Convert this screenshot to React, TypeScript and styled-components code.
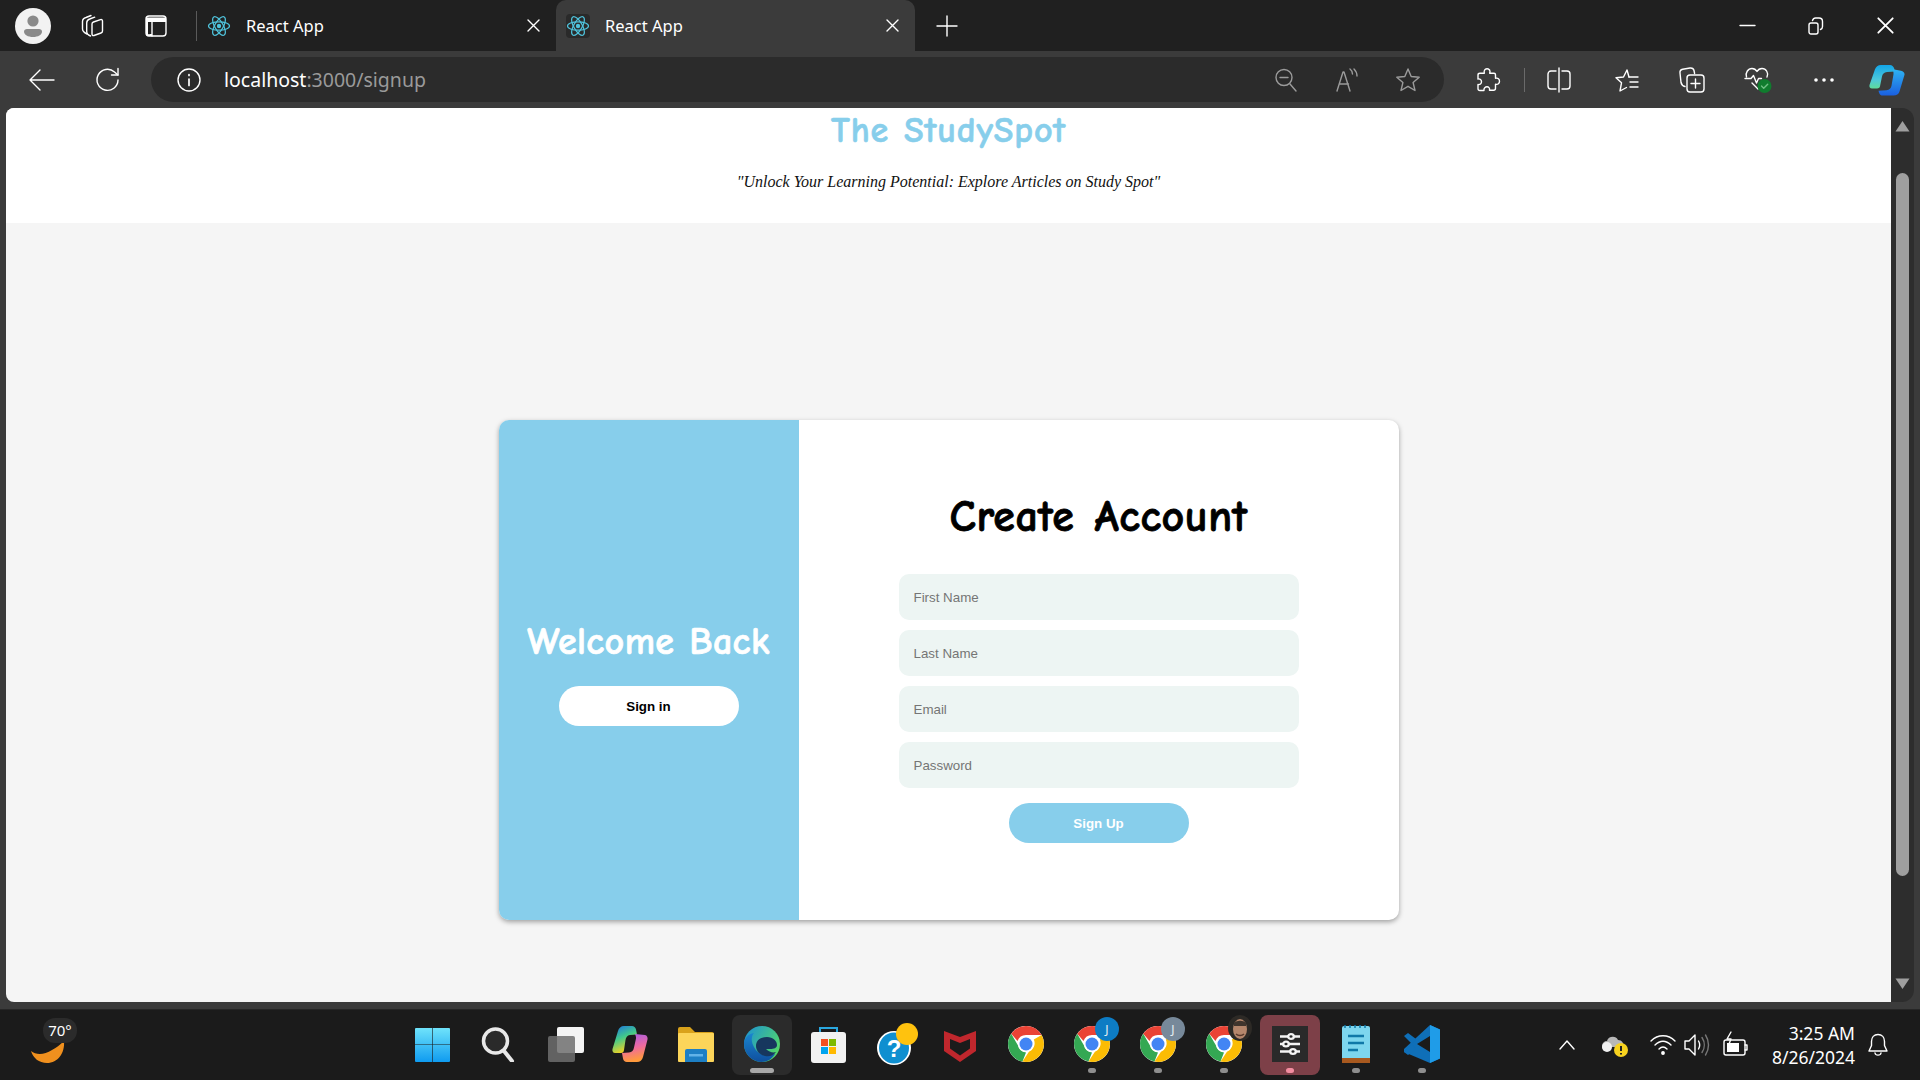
import React from 'react';
import styled, { createGlobalStyle } from 'styled-components';

const GlobalStyle = createGlobalStyle`
  html, body {
    margin: 0;
    padding: 0;
    height: 100%;
    overflow: hidden;
    background: #3b3b3b;
  }
  * { box-sizing: border-box; }
`;

const UI_FONT = `"Noto Sans", "Open Sans", sans-serif`;
const COMIC_FONT = `"Comic Sans MS", "Comic Neue", cursive`;
const SKY = '#87ceeb';

const Screen = styled.div`
  width: 1920px;
  height: 1080px;
  display: flex;
  flex-direction: column;
  background: #3b3b3b;
  overflow: hidden;
  font-family: ${UI_FONT};
`;

const TabStrip = styled.div`
  height: 51px;
  flex: none;
  display: flex;
  align-items: center;
  background: #202020;
`;

const IconSlot = styled.div<{ $w: number; $ml?: number }>`
  width: ${p => p.$w}px;
  margin-left: ${p => p.$ml ?? 0}px;
  flex: none;
  display: flex;
  align-items: center;
  justify-content: center;
`;

const StripDivider = styled.div`
  width: 1px;
  height: 30px;
  margin-left: 29px;
  background: #5a5a5a;
  flex: none;
`;

const Tab = styled.div<{ $active?: boolean }>`
  width: 359px;
  height: 51px;
  flex: none;
  display: flex;
  align-items: center;
  padding: 0 12px 0 10px;
  color: #fff;
  font-size: 16.5px;
  border-radius: 10px 10px 0 0;
  background: ${p => (p.$active ? '#3b3b3b' : 'transparent')};
`;

const TabTitle = styled.span`
  flex: 1;
  margin-left: 15px;
`;

const Spacer = styled.div`
  flex: 1;
`;

const Toolbar = styled.div`
  height: 57px;
  flex: none;
  display: flex;
  align-items: flex-start;
  padding-top: 6px;
  background: #3b3b3b;
`;

const ToolSlot = styled.div<{ $w: number }>`
  width: ${p => p.$w}px;
  height: 45px;
  flex: none;
  display: flex;
  align-items: center;
  justify-content: center;
`;

const AddressBar = styled.div`
  width: 1293px;
  height: 45px;
  flex: none;
  display: flex;
  align-items: center;
  padding: 0 4px 0 16px;
  background: #2b2b2b;
  border-radius: 23px;
`;

const UrlText = styled.div`
  flex: 1;
  margin-left: 13px;
  font-size: 19.5px;
  color: #9a9a9a;
`;

const UrlHost = styled.span`
  color: #fff;
`;

const ToolDivider = styled.div`
  width: 1px;
  height: 24px;
  margin-top: 11px;
  background: #6a6a6a;
  flex: none;
`;

const ContentRow = styled.div`
  height: 894px;
  flex: none;
  display: flex;
  padding: 0 6px;
`;

const Page = styled.div`
  flex: 1;
  min-width: 0;
  display: flex;
  flex-direction: column;
  background: #f5f5f5;
  border-radius: 8px 0 0 8px;
  overflow: hidden;
`;

const Header = styled.header`
  height: 115px;
  flex: none;
  background: #fff;
  text-align: center;
`;

const SiteTitle = styled.h1`
  margin: 0;
  padding-top: 3px;
  font: bold 36px/40px ${COMIC_FONT};
  letter-spacing: 0.9px;
  word-spacing: 1px;
  color: ${SKY};
  -webkit-text-stroke: 0.6px ${SKY};
`;

const Tagline = styled.p`
  margin: 21px 0 0;
  font: italic 16px/20px "Liberation Serif", serif;
  color: #111;
`;

const Main = styled.main`
  flex: 1;
  display: flex;
  justify-content: center;
  padding-top: 197px;
`;

const Card = styled.section`
  width: 900px;
  height: 500px;
  display: flex;
  background: #fff;
  border-radius: 10px;
  overflow: hidden;
  box-shadow: 0 2px 5px rgba(0, 0, 0, 0.35);
`;

const WelcomePanel = styled.div`
  width: 300px;
  flex: none;
  display: flex;
  flex-direction: column;
  align-items: center;
  padding-top: 197px;
  background: ${SKY};
`;

const WelcomeTitle = styled.h2`
  margin: 0 0 19px;
  font: bold 38px/50px ${COMIC_FONT};
  letter-spacing: 0.4px;
  word-spacing: 1px;
  color: #fff;
  -webkit-text-stroke: 0.7px #fff;
`;

const PillButton = styled.button<{ $primary?: boolean }>`
  width: 180px;
  height: 40px;
  border: 0;
  border-radius: 20px;
  font: bold 13.33px "Liberation Sans", Arial, sans-serif;
  background: ${p => (p.$primary ? SKY : '#fff')};
  color: ${p => (p.$primary ? '#fff' : '#000')};
`;

const FormPanel = styled.form`
  flex: 1;
  display: flex;
  flex-direction: column;
  align-items: center;
  padding-top: 69px;
`;

const FormTitle = styled.h2`
  margin: 0 0 29px;
  font: bold 44px/56px ${COMIC_FONT};
  letter-spacing: 0.5px;
  word-spacing: 4px;
  color: #000;
  -webkit-text-stroke: 0.8px #000;
`;

const Field = styled.input`
  width: 400px;
  height: 46px;
  flex: none;
  margin-bottom: 10px;
  padding: 0 15px;
  border: 0;
  border-radius: 10px;
  background: #edf5f3;
  font: 13.33px "Liberation Sans", Arial, sans-serif;
  &::placeholder { color: #757575; }
`;

const SubmitRow = styled.div`
  margin-top: 5px;
`;

const ScrollTrack = styled.div`
  width: 23px;
  flex: none;
  position: relative;
  background: #2d2d2d;
  border-radius: 0 12px 12px 0;
`;

const ScrollThumb = styled.div`
  position: absolute;
  top: 65px;
  left: 5px;
  width: 13px;
  height: 703px;
  border-radius: 7px;
  background: #9f9f9f;
`;

const ScrollArrow = styled.svg<{ $down?: boolean }>`
  position: absolute;
  left: 4px;
  width: 15px;
  height: 12px;
  ${p => (p.$down ? 'bottom: 12px;' : 'top: 12px;')}
`;

const Taskbar = styled.footer`
  margin-top: 7px;
  height: 71px;
  flex: none;
  position: relative;
  display: flex;
  padding: 5px 0 0 399px;
  background: #1b1b1b;
  border-top: 1px solid #262626;
`;

const TaskItem = styled.div<{ $tile?: 'edge' | 'settings' }>`
  width: 60px;
  height: 60px;
  margin: 0 3px;
  flex: none;
  position: relative;
  display: flex;
  align-items: center;
  justify-content: center;
  padding-bottom: 2px;
  border-radius: 8px;
  background: ${p => (p.$tile === 'edge' ? '#2b2b2b' : p.$tile === 'settings' ? '#7d4048' : 'transparent')};
`;

const RunDot = styled.span<{ $wide?: boolean; $pink?: boolean }>`
  position: absolute;
  left: 50%;
  bottom: 2px;
  width: ${p => (p.$wide ? 24 : 8)}px;
  height: 5px;
  transform: translateX(-50%);
  border-radius: 3px;
  background: ${p => (p.$pink ? '#f28da0' : p.$wide ? '#a8a8a8' : '#8e8e8e')};
`;

const CountBadge = styled.span<{ $bg: string }>`
  position: absolute;
  top: 2px;
  right: 3px;
  width: 24px;
  height: 24px;
  border-radius: 50%;
  display: flex;
  align-items: center;
  justify-content: center;
  font-size: 12px;
  color: #e8f0f4;
  background: ${p => p.$bg};
`;

const WeatherBox = styled.div`
  position: absolute;
  left: 26px;
  top: 0;
  width: 56px;
  height: 70px;
`;

const TempChip = styled.span`
  position: absolute;
  left: 17px;
  top: 8px;
  width: 34px;
  height: 25px;
  border-radius: 12px;
  background: #2b2b2b;
  color: #fff;
  font-size: 15px;
  line-height: 25px;
  text-align: center;
`;

const Tray = styled.div`
  position: absolute;
  top: 0;
  right: 0;
  height: 70px;
  display: flex;
  align-items: center;
`;

const Clock = styled.div`
  margin-left: 8px;
  width: 99px;
  color: #fff;
  font-size: 17.5px;
  line-height: 24px;
  text-align: right;
  white-space: nowrap;
`;

const Ico = styled.svg.attrs({ fill: 'none', stroke: 'currentColor', strokeWidth: 1.4, strokeLinecap: 'round', strokeLinejoin: 'round' })<{ $dim?: boolean }>`
  display: block;
  overflow: visible;
  color: ${p => (p.$dim ? '#9b9b9b' : '#fff')};
`;

const ReactLogo = ({ boxed }: { boxed?: boolean }) => (
  <svg width="24" height="24" viewBox="-12 -12 24 24" fill="none" stroke="#4fc3dc" strokeWidth="1.2">
    {boxed && <rect x="-12" y="-12" width="24" height="24" rx="4" fill="#2a2a2a" stroke="none" />}
    <circle r="2.2" fill="#4fc3dc" stroke="none" />
    <ellipse rx="10.5" ry="4.2" />
    <ellipse rx="10.5" ry="4.2" transform="rotate(60)" />
    <ellipse rx="10.5" ry="4.2" transform="rotate(120)" />
  </svg>
);

const Avatar = () => (
  <svg width="36" height="36" viewBox="0 0 36 36">
    <circle cx="18" cy="18" r="18" fill="#f2f2f2" />
    <circle cx="18" cy="13" r="5.6" fill="#8a8a8a" />
    <path d="M9 23.5c0-1.6 1.3-2.5 3-2.5h12c1.7 0 3 .9 3 2.5 0 3.4-4 5.5-9 5.5s-9-2.1-9-5.5z" fill="#8a8a8a" />
  </svg>
);

const WorkspacesIcon = () => (
  <Ico width="26" height="26" viewBox="0 0 26 26">
    <path d="M8 21c-3-1.400-4.500-3-4.500-5V8.500C3.500 6.500 5 5 7 4.500l5-2" />
    <path d="M11.500 23c-2.500-1-3.800-2.500-3.800-4.500V10c0-2 1-3.400 3-4l5-1.800" />
    <path d="M13 11c0-1 .6-1.700 1.500-2l7-2.400c1.200-.4 2 .3 2 1.400v10c0 1-.5 1.700-1.500 2l-7 2.500c-1.200.4-2-.3-2-1.500z" />
  </Ico>
);

const TabsIcon = () => (
  <Ico width="22" height="22" viewBox="0 0 22 22" strokeWidth={1.6}>
    <rect x="1" y="1" width="20" height="20" rx="3" />
    <path d="M1 2.500h20V7H7v14H3a2 2 0 0 1-2-2z" fill="#fff" stroke="none" />
    <path d="M3 7v12a2 2 0 0 0 2 0h2V7z" fill="#202020" stroke="none" />
    <path d="M7 7v14" />
  </Ico>
);

const CloseIcon = ({ size = 13 }: { size?: number }) => (
  <Ico width={size} height={size} viewBox="0 0 13 13">
    <path d="M1 1l11 11M12 1L1 12" />
  </Ico>
);

const PlusIcon = () => (
  <Ico width="20" height="20" viewBox="0 0 20 20">
    <path d="M10 0v20M0 10h20" />
  </Ico>
);

const MinimizeIcon = () => (
  <Ico width="15" height="3" viewBox="0 0 15 3" strokeWidth={1.6}>
    <path d="M0 1.500h15" />
  </Ico>
);

const RestoreIcon = () => (
  <Ico width="16" height="18" viewBox="0 0 16 18">
    <rect x="1" y="6" width="9" height="11" rx="2" />
    <path d="M4.500 3.500C5 2 6 1 7.500 1H11c2 0 3.500 1.500 3.500 3.500v5c0 1.500-.7 2.500-2 3" />
  </Ico>
);

const BackIcon = () => (
  <Ico width="26" height="22" viewBox="0 0 26 22">
    <path d="M25 11H1M11 1L1 11l10 10" />
  </Ico>
);

const ReloadIcon = () => (
  <Ico width="26" height="26" viewBox="0 0 26 26">
    <path d="M23 13A10.500 10.500 0 1 1 19.500 5L23 8" />
    <path d="M23 1.500V8h-6.500" />
  </Ico>
);

const InfoIcon = () => (
  <Ico width="24" height="24" viewBox="0 0 24 24">
    <circle cx="12" cy="12" r="11" />
    <path d="M12 11v6.500M12 6.500v1" strokeWidth={1.7} />
  </Ico>
);

const ZoomOutIcon = () => (
  <Ico $dim width="22" height="24" viewBox="0 0 22 24">
    <circle cx="9" cy="9.500" r="8" />
    <path d="M5 9.500h8M15 16l6 7" />
  </Ico>
);

const ReadAloudIcon = () => (
  <Ico $dim width="24" height="24" viewBox="0 0 24 24">
    <path d="M2 23l6-19h1l6 19M4.500 16h9" />
    <path d="M15 1c2 1.500 2.500 3 2.500 5M19 1c2 2 3 4 3 7" />
  </Ico>
);

const StarIcon = () => (
  <Ico $dim width="26" height="26" viewBox="0 0 26 26">
    <path d="M13 2l3.200 7.500 8 .7-6.100 5.300 1.900 8L13 19.300 6 23.500l1.900-8-6.100-5.300 8-.7z" />
  </Ico>
);

const PuzzleIcon = () => (
  <Ico width="24" height="26" viewBox="0 0 24 26">
    <path d="M9 2.500c2-1.500 5-.5 5 2 0 .7-.3 1.200-.3 1.800h4.300c1 0 1.500.6 1.500 1.500v3.500c2.500-.7 4 1 4 3s-1.500 3.500-4 3v4c0 1-.6 2-2 2h-4c.5-2.500-1-3.500-2.500-3.500S7.500 21 8 23.500H4c-1.500 0-2-1-2-2v-4c2 .5 3.500-1 3.500-2.700S4 11.500 2 12V8c0-1 .7-1.700 2-1.700h4.300C8 5 8 3.500 9 2.500z" />
  </Ico>
);

const SplitIcon = () => (
  <Ico width="24" height="26" viewBox="0 0 24 26">
    <path d="M9 4H4a3 3 0 0 0-3 3v12a3 3 0 0 0 3 3h5M15 4h5a3 3 0 0 1 3 3v12a3 3 0 0 1-3 3h-5M12 1v24" />
  </Ico>
);

const FavouritesIcon = () => (
  <Ico width="26" height="26" viewBox="0 0 26 26">
    <path d="M16 10l-2-7-3.500 7-7.500.8 5.500 5L7 24l6.500-3.500" />
    <path d="M16 10h9M17 15h8M17 20h8" />
  </Ico>
);

const CollectionsIcon = () => (
  <Ico width="26" height="26" viewBox="0 0 26 26">
    <path d="M6 19.500c-2-.5-3.500-2-4-4L1 6c-.3-2 .8-3.400 2.700-3.800L11 1c2-.2 3.600.8 4 2.500l.6 3" />
    <rect x="8" y="8" width="17" height="17" rx="3" />
    <path d="M16.500 12v9M12 16.500h9" />
  </Ico>
);

const HealthIcon = () => (
  <svg width="28" height="28" viewBox="0 0 28 28" fill="none" stroke="#fff" strokeWidth="1.4" strokeLinejoin="round" strokeLinecap="round">
    <path d="M2.500 11C1 7 4 2.500 8 2.500c2.500 0 4 1.300 5 3 1-1.700 2.500-3 5-3 4 0 7 4.500 5 8.500" />
    <path d="M1 12.500h6l2.500-3 3 7.500 2-4.500h3M8 17l6 6" />
    <circle cx="20.500" cy="20" r="7" fill="#107c2e" stroke="none" />
    <path d="M17.500 20l2.200 2.200 4-4" stroke="#6fbf82" />
  </svg>
);

const MoreIcon = () => (
  <svg width="20" height="4" viewBox="0 0 20 4" fill="#fff">
    <circle cx="2" cy="2" r="1.800" />
    <circle cx="10" cy="2" r="1.800" />
    <circle cx="18" cy="2" r="1.800" />
  </svg>
);

const CopilotIcon = () => (
  <svg width="36" height="32" viewBox="0 0 36 36" preserveAspectRatio="none">
    <defs>
      <linearGradient id="cpA" x1="0" y1="0" x2="0" y2="1">
        <stop offset="0" stopColor="#12a5e8" />
        <stop offset="0.65" stopColor="#4fc9d8" />
        <stop offset="1" stopColor="#5fdc9a" />
      </linearGradient>
      <linearGradient id="cpB" x1="0" y1="0" x2="0" y2="1">
        <stop offset="0" stopColor="#2eb3f2" />
        <stop offset="1" stopColor="#1a5fe0" />
      </linearGradient>
    </defs>
    <path d="M12 1h9c2 0 3.500 1.500 4 3.500l1 4-8 .5c-3 .3-4.500 2.500-5 5l-2 11c-.3 1.500-1 2.500-3 2.500H3c-2 0-3-2-2.500-4L6 6c.7-3 3-5 6-5z" fill="url(#cpA)" />
    <path d="M24 6l8 1.500c2 .4 4 2.500 3.500 4.500l-5 19c-.7 3-3 4.500-6 4.500H14c-2.500 0-3.500-1.500-4-3.500l-.5-2 8-.5c3-.3 4.500-2 5-5l2-13c.2-2.500-.5-4-.5-5.500z" fill="url(#cpB)" />
  </svg>
);

const WindowsLogo = () => (
  <svg width="35" height="35" viewBox="0 0 35 35">
    <defs>
      <linearGradient id="winA" x1="0" y1="0" x2="0" y2="1">
        <stop offset="0" stopColor="#6fe3fb" />
        <stop offset="1" stopColor="#0f9bf0" />
      </linearGradient>
    </defs>
    <path d="M1 1h16.200v16.200H0V2a1 1 0 0 1 1-1zM17.800 1H34a1 1 0 0 1 1 1v15.200H17.800zM0 17.800h17.200V35H1a1 1 0 0 1-1-1zM17.800 17.800H35V34a1 1 0 0 1-1 1H17.800z" fill="url(#winA)" />
  </svg>
);

const SearchGlass = () => (
  <svg width="35" height="35" viewBox="0 0 35 35" fill="none">
    <circle cx="14.500" cy="14" r="12" stroke="#e8e8e8" strokeWidth="3.500" fill="#2a2a2a" />
    <path d="M23 24l8 10" stroke="#e8e8e8" strokeWidth="4" strokeLinecap="round" />
  </svg>
);

const TaskViewIcon = () => (
  <svg width="36" height="35" viewBox="0 0 36 35" style={{ marginLeft: 3 }}>
    <rect x="9" y="0" width="27" height="26" rx="2" fill="#f4f4f4" />
    <rect x="0" y="9" width="27" height="26" rx="2" fill="#6f6f6f" fillOpacity="0.85" />
  </svg>
);

const CopilotColor = () => (
  <svg width="36" height="36" viewBox="0 0 36 36">
    <defs>
      <linearGradient id="ccA" x1="0" y1="0" x2="0.4" y2="1">
        <stop offset="0" stopColor="#1b6fe8" />
        <stop offset="0.5" stopColor="#42c98a" />
        <stop offset="1" stopColor="#f7d21f" />
      </linearGradient>
      <linearGradient id="ccB" x1="0" y1="0" x2="0.2" y2="1">
        <stop offset="0" stopColor="#a25be8" />
        <stop offset="0.55" stopColor="#ee6aa0" />
        <stop offset="1" stopColor="#ff9a3c" />
      </linearGradient>
    </defs>
    <path d="M12 0h8c2 0 3.500 1.500 4 3.500l1 5-7 .5c-3 .3-4 2.500-4.500 5L12 24c-.3 2-1 3-3 3H3c-2 0-3-2-2.500-4L6 5c.7-3 3-5 6-5z" fill="url(#ccA)" />
    <path d="M23 8l10 1c2 .4 3 2.500 2.500 4.500L31 31c-.7 3-3 5-6 5H15c-2.500 0-3.500-1.500-4-3.500L10 27l7-.5c3-.3 4.500-2 5-5l2-9c.2-2-.5-3-1-4.500z" fill="url(#ccB)" />
  </svg>
);

const FolderIcon = () => (
  <svg width="36" height="35" viewBox="0 0 36 35">
    <path d="M0 2a2 2 0 0 1 2-2h10l5 5h17a2 2 0 0 1 2 2v4H0z" fill="#d9a21b" />
    <rect x="0" y="6" width="36" height="29" rx="1" fill="#fcd55a" />
    <path d="M7 24a2 2 0 0 1 2-2h18a2 2 0 0 1 2 2v11H7z" fill="#1d7fc4" />
    <rect x="11" y="27" width="14" height="2.500" fill="#62b3e8" />
  </svg>
);

const EdgeIcon = () => (
  <svg width="36" height="36" viewBox="0 0 36 36">
    <defs>
      <linearGradient id="edA" x1="0" y1="0" x2="1" y2="0.6">
        <stop offset="0" stopColor="#1b8fd6" />
        <stop offset="1" stopColor="#52d66b" />
      </linearGradient>
      <linearGradient id="edB" x1="0" y1="0" x2="0" y2="1">
        <stop offset="0" stopColor="#1a86d0" />
        <stop offset="1" stopColor="#0f4f9e" />
      </linearGradient>
    </defs>
    <circle cx="18" cy="18" r="18" fill="url(#edA)" />
    <path d="M18 36C8 36 0 28 0 18 0 12 4 8 10 7c-3 3-3 9 0 14 3 6 9 9 15 8l6-1c-3 5-8 8-13 8z" fill="url(#edB)" />
    <path d="M12 20c0-6 5-9 11-9 6 0 10 4 10 8 0 3-3 4-7 4h-4c3 3 7 4 10 3-3 4-7 5-11 4-5-1-9-5-9-10z" fill="#17375e" />
  </svg>
);

const StoreIcon = () => (
  <svg width="35" height="37" viewBox="0 0 35 37">
    <path d="M9 6V2h17v4" fill="none" stroke="#2aa7df" strokeWidth="2" />
    <rect x="0" y="6" width="35" height="31" rx="3" fill="#f2f2f2" />
    <rect x="10" y="13" width="7" height="7" fill="#f25022" />
    <rect x="18" y="13" width="7" height="7" fill="#7fba00" />
    <rect x="10" y="21" width="7" height="7" fill="#00a4ef" />
    <rect x="18" y="21" width="7" height="7" fill="#ffb900" />
  </svg>
);

const HelpIcon = () => (
  <svg width="42" height="42" viewBox="0 0 42 42" style={{ marginLeft: 5 }}>
    <ellipse cx="18" cy="25" rx="17" ry="17" fill="#fff" />
    <ellipse cx="18" cy="25" rx="15" ry="15.500" fill="#0f8fd0" />
    <text x="18" y="34" textAnchor="middle" fontSize="24" fontWeight="700" fontFamily="Liberation Sans, sans-serif" fill="#fff">?</text>
    <circle cx="31" cy="11" r="11" fill="#ffc20e" />
  </svg>
);

const McafeeIcon = () => (
  <svg width="32" height="35" viewBox="0 0 32 35" fill="#c0272d">
    <path d="M0 4l16 6 16-6v20L16 35 0 24zM6 12v9.500l10 7 10-7V12l-10 4z" fillRule="evenodd" />
  </svg>
);

const ChromeIcon = () => (
  <svg width="36" height="36" viewBox="0 0 36 36">
    <circle cx="18" cy="18" r="18" fill="#fff" />
    <path d="M18 0a18 18 0 0 1 15.600 9H18a9 9 0 0 0-8.500 6L3.200 7.800A18 18 0 0 1 18 0z" fill="#ea4335" />
    <path d="M3.200 7.800L10 19.500a9 9 0 0 0 8 7L14.500 35.600A18 18 0 0 1 3.200 7.800z" fill="#34a853" />
    <path d="M33.600 9A18 18 0 0 1 14.500 35.600l6.600-10a9 9 0 0 0 4.700-12z" fill="#fbbc04" />
    <circle cx="18" cy="18" r="8" fill="#fff" />
    <circle cx="18" cy="18" r="6.500" fill="#4285f4" />
  </svg>
);

const PhotoBadge = () => (
  <svg width="24" height="26" viewBox="0 0 24 26" style={{ position: 'absolute', top: 0, right: 2 }}>
    <ellipse cx="12" cy="13" rx="12" ry="13" fill="#2d2a26" />
    <ellipse cx="12" cy="14" rx="7" ry="10" fill="#b5866b" />
    <path d="M6 8c3-3 9-3 12 0v3H6z" fill="#40352d" />
    <path d="M8 19c2 2 6 2 8 0" stroke="#5a3a2c" strokeWidth="1.500" fill="none" />
  </svg>
);

const SettingsTile = () => (
  <svg width="36" height="36" viewBox="0 0 36 36">
    <rect width="36" height="36" fill="#2a2a2a" />
    <g stroke="#f4f4f4" strokeWidth="2.400" fill="#2a2a2a">
      <path d="M8 10.500h20M8 18h20M8 25.500h20" />
      <ellipse cx="19" cy="10.500" rx="2.800" ry="2.400" />
      <ellipse cx="14" cy="18" rx="2.800" ry="2.400" />
      <ellipse cx="21" cy="25.500" rx="2.800" ry="2.400" />
    </g>
  </svg>
);

const NotepadIcon = () => (
  <svg width="28" height="38" viewBox="0 0 28 38">
    <rect x="0" y="1" width="28" height="36" rx="2" fill="#7dd6ee" />
    <rect x="0" y="33" width="28" height="5" fill="#a8591f" />
    <path d="M6 11h16M6 18h16M6 25h10" stroke="#0f78a8" strokeWidth="2.500" />
    <path d="M3 0v3M8 0v3M13 0v3M18 0v3M23 0v3" stroke="#0f78a8" strokeWidth="1.500" />
  </svg>
);

const VscodeIcon = () => (
  <svg width="36" height="38" viewBox="0 0 36 38">
    <path d="M26 0l10 4.500v29L26 38 0 27v-3z" fill="#0f6fb8" />
    <path d="M26 0l10 4.500v29L26 38z" fill="#1f9ce8" />
    <path d="M26 11L13 19l13 8z" fill="#1b1b1b" />
    <path d="M0 11l4-3 8 6-4 5zM0 27l4 3 8-6-4-5z" fill="#0f6fb8" />
  </svg>
);

const MoonIcon = () => (
  <svg width="34" height="24" viewBox="0 0 34 24" style={{ position: 'absolute', left: 5, top: 30 }}>
    <path d="M33 1c1 12-6 22-17 22C8 23 2 18 0 11c5 4 13 4 21-1 4-2 8-5 12-9z" fill="#f0901e" />
  </svg>
);

const ChevronUpIcon = () => (
  <Ico width="16" height="10" viewBox="0 0 16 10" strokeWidth={1.8}>
    <path d="M1 9l7-8 7 8" />
  </Ico>
);

const CloudIcon = () => (
  <svg width="28" height="28" viewBox="0 0 28 28">
    <path d="M5 20a5 5 0 0 1 0-10c1-5 9-6 11-1 4 0 6 3 5 7H8z" fill="#b8b8b8" />
    <circle cx="5" cy="16" r="5" fill="#f2f2f2" />
    <circle cx="19" cy="19" r="7" fill="#f7d21f" />
    <path d="M19 15v5M19 22v1.500" stroke="#222" strokeWidth="2" />
  </svg>
);

const WifiIcon = () => (
  <Ico width="26" height="24" viewBox="0 0 26 24" strokeWidth={1.8}>
    <path d="M1 8c7-7 17-7 24 0M5 12c5-5 11-5 16 0M9 16c2.500-2.500 5.500-2.500 8 0" />
    <circle cx="13" cy="20" r="1.200" fill="#fff" />
  </Ico>
);

const VolumeIcon = () => (
  <Ico width="24" height="26" viewBox="0 0 24 26">
    <path d="M1 9h4l6-6v20l-6-6H1z" />
    <path d="M14.500 9c1.500 2.500 1.500 5.500 0 8" />
    <path d="M18 5.500c3 4.500 3 10.500 0 15M21.500 3c4 6 4 14 0 20" stroke="#777" />
  </Ico>
);

const BatteryIcon = () => (
  <Ico width="26" height="28" viewBox="0 0 26 28" strokeWidth={1.6}>
    <rect x="2" y="9" width="21" height="15" rx="2" />
    <rect x="5" y="12" width="12" height="9" fill="#fff" stroke="none" />
    <path d="M23 14h2v5h-2" />
    <path d="M9 1L5 8h4L7 13" strokeWidth={1.4} />
  </Ico>
);

const BellIcon = () => (
  <Ico width="20" height="24" viewBox="0 0 20 24">
    <path d="M10 1.500c-4 0-6.500 3-6.500 7v4L1 18h18l-2.500-5.500v-4c0-4-2.500-7-6.500-7z" />
    <path d="M7 20c.5 2.800 5.500 2.800 6 0" />
  </Ico>
);

const FIELDS = ['First Name', 'Last Name', 'Email', 'Password'];

const App = () => (
  <Screen>
    <GlobalStyle />
    <TabStrip>
      <IconSlot $w={36} $ml={15}><Avatar /></IconSlot>
      <IconSlot $w={26} $ml={28}><WorkspacesIcon /></IconSlot>
      <IconSlot $w={22} $ml={40}><TabsIcon /></IconSlot>
      <StripDivider />
      <Tab>
        <ReactLogo />
        <TabTitle>React App</TabTitle>
        <CloseIcon />
        <IconSlot $w={4} />
      </Tab>
      <Tab $active>
        <ReactLogo boxed />
        <TabTitle>React App</TabTitle>
        <CloseIcon />
        <IconSlot $w={4} />
      </Tab>
      <IconSlot $w={20} $ml={22}><PlusIcon /></IconSlot>
      <Spacer />
      <IconSlot $w={30}><MinimizeIcon /></IconSlot>
      <IconSlot $w={30} $ml={39}><RestoreIcon /></IconSlot>
      <IconSlot $w={30} $ml={39}><CloseIcon size={17} /></IconSlot>
      <IconSlot $w={20} />
    </TabStrip>

    <Toolbar>
      <ToolSlot $w={84}><BackIcon /></ToolSlot>
      <ToolSlot $w={48}><ReloadIcon /></ToolSlot>
      <ToolSlot $w={19} />
      <AddressBar>
        <IconSlot $w={44}><InfoIcon /></IconSlot>
        <UrlText><UrlHost>localhost</UrlHost>:3000/signup</UrlText>
        <ToolSlot $w={60}><ZoomOutIcon /></ToolSlot>
        <ToolSlot $w={62}><ReadAloudIcon /></ToolSlot>
        <ToolSlot $w={60}><StarIcon /></ToolSlot>
        <ToolSlot $w={2} />
      </AddressBar>
      <ToolSlot $w={8} />
      <ToolSlot $w={72}><PuzzleIcon /></ToolSlot>
      <ToolDivider />
      <ToolSlot $w={68}><SplitIcon /></ToolSlot>
      <ToolSlot $w={66}><FavouritesIcon /></ToolSlot>
      <ToolSlot $w={66}><CollectionsIcon /></ToolSlot>
      <ToolSlot $w={66}><HealthIcon /></ToolSlot>
      <ToolSlot $w={66}><MoreIcon /></ToolSlot>
      <ToolSlot $w={60}><CopilotIcon /></ToolSlot>
    </Toolbar>

    <ContentRow>
      <Page>
        <Header>
          <SiteTitle>The StudySpot</SiteTitle>
          <Tagline>"Unlock Your Learning Potential: Explore Articles on Study Spot"</Tagline>
        </Header>
        <Main>
          <Card>
            <WelcomePanel>
              <WelcomeTitle>Welcome Back</WelcomeTitle>
              <PillButton type="button">Sign in</PillButton>
            </WelcomePanel>
            <FormPanel>
              <FormTitle>Create Account</FormTitle>
              {FIELDS.map(name => (
                <Field key={name} placeholder={name} />
              ))}
              <SubmitRow>
                <PillButton type="button" $primary>Sign Up</PillButton>
              </SubmitRow>
            </FormPanel>
          </Card>
        </Main>
      </Page>
      <ScrollTrack>
        <ScrollArrow viewBox="0 0 15 12"><path d="M7.500 1L14.500 11.500H.5z" fill="#9f9f9f" /></ScrollArrow>
        <ScrollThumb />
        <ScrollArrow $down viewBox="0 0 15 12"><path d="M.5.5h14L7.500 11z" fill="#9f9f9f" /></ScrollArrow>
      </ScrollTrack>
    </ContentRow>

    <Taskbar>
      <WeatherBox>
        <MoonIcon />
        <TempChip>70°</TempChip>
      </WeatherBox>
      <TaskItem><WindowsLogo /></TaskItem>
      <TaskItem><SearchGlass /></TaskItem>
      <TaskItem><TaskViewIcon /></TaskItem>
      <TaskItem><CopilotColor /></TaskItem>
      <TaskItem><FolderIcon /></TaskItem>
      <TaskItem $tile="edge"><EdgeIcon /><RunDot $wide /></TaskItem>
      <TaskItem><StoreIcon /></TaskItem>
      <TaskItem><HelpIcon /></TaskItem>
      <TaskItem><McafeeIcon /></TaskItem>
      <TaskItem><ChromeIcon /></TaskItem>
      <TaskItem><ChromeIcon /><CountBadge $bg="#0d7cc4">J</CountBadge><RunDot /></TaskItem>
      <TaskItem><ChromeIcon /><CountBadge $bg="#77899a">J</CountBadge><RunDot /></TaskItem>
      <TaskItem><ChromeIcon /><PhotoBadge /><RunDot /></TaskItem>
      <TaskItem $tile="settings"><SettingsTile /><RunDot $pink /></TaskItem>
      <TaskItem><NotepadIcon /><RunDot /></TaskItem>
      <TaskItem><VscodeIcon /><RunDot /></TaskItem>
      <Tray>
        <IconSlot $w={16}><ChevronUpIcon /></IconSlot>
        <IconSlot $w={28} $ml={27}><CloudIcon /></IconSlot>
        <IconSlot $w={26} $ml={20}><WifiIcon /></IconSlot>
        <IconSlot $w={24} $ml={8}><VolumeIcon /></IconSlot>
        <IconSlot $w={26} $ml={14}><BatteryIcon /></IconSlot>
        <Clock>3:25 AM<br />8/26/2024</Clock>
        <IconSlot $w={20} $ml={13}><BellIcon /></IconSlot>
        <IconSlot $w={32} />
      </Tray>
    </Taskbar>
  </Screen>
);

export default App;
